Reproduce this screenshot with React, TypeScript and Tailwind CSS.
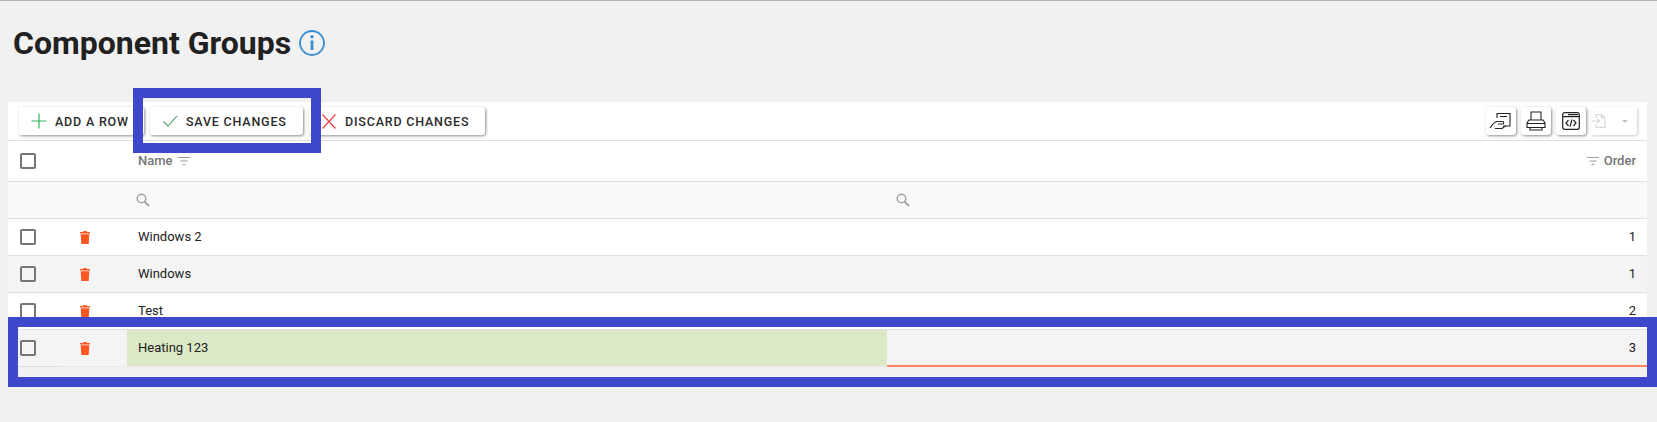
const rows = [
    { name: 'Windows 2', order: 1 },
    { name: 'Windows', order: 1 },
    { name: 'Test', order: 2 },
    { name: 'Heating 123', order: 3 },
];

const FilterIcon = () => (
    <svg className="block text-[#9e9e9e]" width="12" height="9" viewBox="0 0 12 9" fill="none" stroke="currentColor" strokeWidth="1">
        <path d="M0 .5h12M2.500 4h7M4.500 7.500h3" />
    </svg>
);

const SearchIcon = () => (
    <svg className="block" width="14" height="14" viewBox="0 0 14 14" fill="none" stroke="#a3a3a3" strokeWidth="1.5">
        <circle cx="5.500" cy="5.500" r="4.300" />
        <path d="M8.600 8.600 13 13" strokeWidth="1.800" />
    </svg>
);

const TrashIcon = () => (
    <svg className="block" width="10" height="13" viewBox="0 0 10 13" fill="#ff5722">
        <path d="M3.300 0h3.400v1H10v1.500H0V1h3.300zM.7 3.300h8.600L8.700 13H1.300z" />
    </svg>
);

const InfoIcon = () => (
    <svg className="block" width="26" height="26" viewBox="0 0 26 26" fill="none" stroke="#3a8fd0" strokeWidth="1.800">
        <circle cx="13" cy="13" r="12" />
        <path d="M13 10.500V20" strokeWidth="2.800" />
        <circle cx="13" cy="6.800" r="1.700" fill="#3a8fd0" stroke="none" />
    </svg>
);

const PlusIcon = () => (
    <svg className="block" width="16" height="16" viewBox="0 0 16 16" fill="none" stroke="#2fb457" strokeWidth="1.200">
        <path d="M8 .5v15M.5 8h15" />
    </svg>
);

const CheckIcon = () => (
    <svg className="block" width="16" height="12" viewBox="0 0 16 12" fill="none" stroke="#3fa45f" strokeWidth="1.100">
        <path d="M1.500 6.500 6 11 15 1" />
    </svg>
);

const CrossIcon = () => (
    <svg className="block" width="16" height="15" viewBox="0 0 16 15" fill="none" stroke="#f0414f" strokeWidth="1.200">
        <path d="m1.500 .5 13 14M14.500 .5l-13 14" />
    </svg>
);

const Checkbox = () => <span className="block w-4 h-4 border-2 border-[#757575] rounded-[2px]"></span>;

const SignIcon = () => (
    <svg className="block" width="24" height="18" viewBox="0 0 24 18" fill="none" stroke="#222" strokeWidth="1.100">
        <path d="M8 6V1.500h13V14h-7M11 4.500h7M1 16c2-3 4-6 7-6.500h6c1 .5 1 2 0 2.500H9M6 16.500h7l4-3" />
    </svg>
);

const PrintIcon = () => (
    <svg className="block" width="20" height="20" viewBox="0 0 20 20" fill="none" stroke="#222" strokeWidth="1.100">
        <path d="M5 9V1h10v8M3 9h14l2 3v4.500H1V12zM4 16.500v2.500h12v-2.500M1 12.500h18" />
    </svg>
);

const CodeIcon = () => (
    <svg className="block" width="18" height="18" viewBox="0 0 18 18" fill="none" stroke="#222" strokeWidth="1.200">
        <rect x=".7" y=".7" width="16.600" height="16.600" rx="2" />
        <path d="M.7 4.700h16.600M6 2.700h10" />
        <path d="M6.500 8 4 11l2.500 3M11.500 8 14 11l-2.500 3M10 7.500l-2 7" />
    </svg>
);

const ExportIcon = () => (
    <svg className="block" width="14" height="14" viewBox="0 0 14 14" fill="none" stroke="#d8d8d8" strokeWidth="1.200">
        <path d="M4 4V.6h5.500L13 4v9.400H4V10M9.500 .6V4H13M0 7h7M5 4.800 7.300 7 5 9.200" />
    </svg>
);

const ToolbarButton = ({ icon, label, width }: { icon: React.ReactNode; label: string; width: string }) => (
    <button className={`${width} h-7 flex items-center bg-white rounded-[3px] shadow-[1px_1px_3px_rgba(0,0,0,0.45)] text-[12.500px] font-medium tracking-[0.8px] text-[#2b2b2b]`}>
        <span className="w-9 pl-3 shrink-0">{icon}</span>
        <span className="pt-[2px]">{label}</span>
    </button>
);

const IconButton = ({ children }: { children: React.ReactNode }) => (
    <button className="w-[30px] h-7 flex items-center justify-center bg-white rounded-[3px] shadow-[1px_1px_3px_rgba(0,0,0,0.45)]">
        {children}
    </button>
);

const App = () => {
    return (
        <div className="relative w-[1657px] h-[422px] overflow-hidden bg-[#f1f1f1] border-t border-[#b4b4b4] font-['Roboto',sans-serif] text-[#212121]">
            <div className="flex items-center h-[84px] pl-[13px] gap-2">
                <h1 className="text-[32px] font-bold leading-none">Component Groups</h1>
                <InfoIcon />
            </div>

            <div className="ml-2 mt-[17px] w-[1639px]">
                <div className="flex items-center justify-between h-[38px] pl-[11px] pr-[10px] bg-white">
                    <div className="flex gap-[6px]">
                        <ToolbarButton width="w-[125px]" label="ADD A ROW" icon={<PlusIcon />} />
                        <ToolbarButton width="w-[153px]" label="SAVE CHANGES" icon={<CheckIcon />} />
                        <ToolbarButton width="w-[176px]" label="DISCARD CHANGES" icon={<CrossIcon />} />
                    </div>
                    <div className="flex gap-[5px]">
                        <IconButton><SignIcon /></IconButton>
                        <IconButton><PrintIcon /></IconButton>
                        <IconButton><CodeIcon /></IconButton>
                        <button className="w-[46px] h-7 flex items-center pl-px gap-4 bg-white rounded-[3px] shadow-[1px_1px_3px_rgba(0,0,0,0.2)]">
                            <ExportIcon />
                            <svg className="block" width="6" height="3" viewBox="0 0 6 3" fill="#c4c4c4"><path d="M0 0h6L3 3z" /></svg>
                        </button>
                    </div>
                </div>

                <div className="grid grid-cols-[50px_69px_760px_1fr] h-[41px] items-center bg-white border-t border-[#e0e0e0] text-[13px] font-medium text-[#757575]">
                    <div className="pl-3"><Checkbox /></div>
                    <div></div>
                    <div className="flex items-center gap-[5px] pl-[11px]">Name <FilterIcon /></div>
                    <div className="flex items-center justify-end gap-[5px] pr-[11px]"><FilterIcon /> Order</div>
                </div>

                <div className="grid grid-cols-[50px_69px_760px_1fr] h-[37px] items-center bg-[#fafafa] border-t border-[#e0e0e0]">
                    <div></div>
                    <div></div>
                    <div className="pl-[9px]"><SearchIcon /></div>
                    <div className="pl-[9px]"><SearchIcon /></div>
                </div>

                {rows.map((row, i) => {
                    const edited = row.name === 'Heating 123';
                    return (
                        <div key={row.name} className={`grid grid-cols-[50px_69px_760px_1fr] items-center border-t border-[#e0e0e0] text-[13px] ${edited ? 'h-[38px] bg-[#f4f4f4]' : i % 2 === 1 ? 'h-[37px] bg-[#f4f4f4]' : 'h-[37px] bg-white'}`}>
                            <div className={`h-full flex items-center pl-3 ${edited ? 'border-b border-[#dedede]' : ''}`}><Checkbox /></div>
                            <div className={`h-full flex items-center pl-[22px] ${edited ? 'border-b border-[#e8e8e8]' : ''}`}><TrashIcon /></div>
                            <div className={`h-full flex items-center pl-[11px] ${edited ? 'bg-[#dce9c7] border-b border-[#e8e8e8]' : ''}`}>{row.name}</div>
                            <div className={`h-full flex items-center justify-end pr-[11px] ${edited ? 'border-b-2 border-[#ff8560]' : ''}`}>{row.order}</div>
                        </div>
                    );
                })}
            </div>

            {/* highlight frames drawn on top of the screenshot */}
            <div className="absolute left-[133px] top-[87px] w-[188px] h-[65px] border-10 border-[#3f48cc]"></div>
            <div className="absolute left-2 top-[316px] w-[1649px] h-[70px] border-10 border-[#3f48cc]"></div>
        </div>
    );
};

export default App;
